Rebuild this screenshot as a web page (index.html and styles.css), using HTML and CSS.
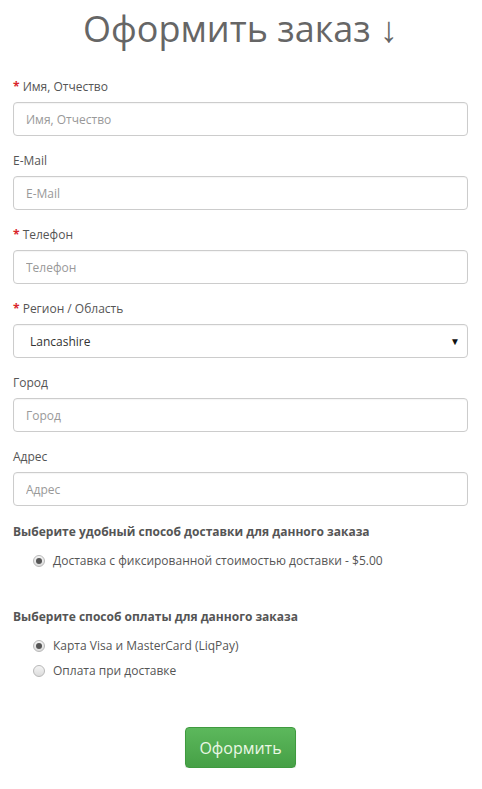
FILE: index.html
```html
<!DOCTYPE html>
<html lang="ru">
<head>
    <meta charset="UTF-8">
    <meta name="viewport" content="width=device-width, initial-scale=1.0">
    <title>Оформить заказ</title>
    <link rel="stylesheet" href="styles.css">
</head>
<body>
    <section class="checkout">
        <h1>Оформить заказ &darr;</h1>

        <form class="checkout-form">
            <div class="form-group">
                <label class="required" for="name">Имя, Отчество</label>
                <input type="text" id="name" placeholder="Имя, Отчество">
            </div>
            <div class="form-group">
                <label for="email">E-Mail</label>
                <input type="text" id="email" placeholder="E-Mail">
            </div>
            <div class="form-group">
                <label class="required" for="phone">Телефон</label>
                <input type="text" id="phone" placeholder="Телефон">
            </div>
            <div class="form-group">
                <label class="required" for="zone">Регион / Область</label>
                <div class="select">
                    <span>Lancashire</span>
                    <span class="caret">&#9660;</span>
                </div>
            </div>
            <div class="form-group">
                <label for="city">Город</label>
                <input type="text" id="city" placeholder="Город">
            </div>
            <div class="form-group">
                <label for="address">Адрес</label>
                <input type="text" id="address" placeholder="Адрес">
            </div>

            <div class="options delivery">
                <h3>Выберите удобный способ доставки для данного заказа</h3>
                <label class="radio"><span class="dot checked"></span>Доставка с фиксированной стоимостью доставки - $5.00</label>
            </div>

            <div class="options payment">
                <h3>Выберите способ оплаты для данного заказа</h3>
                <label class="radio"><span class="dot checked"></span>Карта Visa и MasterCard (LiqPay)</label>
                <label class="radio"><span class="dot"></span>Оплата при доставке</label>
            </div>

            <div class="submit">
                <button type="button">Оформить</button>
            </div>
        </form>
    </section>
</body>
</html>
```

FILE: styles.css
```css
/* General Styles */
body {
    font-family: "Open Sans", Arial, sans-serif;
    margin: 0;
    padding: 0;
    background-color: #fff;
    color: #444;
    font-size: 12px;
}

.checkout {
    padding: 0 14px 0 13px;
}

h1 {
    margin: 0;
    padding-top: 4px;
    height: 73px;
    font-size: 36px;
    font-weight: 400;
    line-height: 50px;
    color: #666;
    text-align: center;
}

.form-group {
    margin-bottom: 15px;
}

.form-group label {
    display: block;
    line-height: 20px;
    margin-bottom: 5px;
    color: #555;
}

.form-group label.required::before {
    content: "* ";
    color: #d9262c;
    font-weight: bold;
}

.form-group input,
.select {
    box-sizing: border-box;
    display: block;
    width: 100%;
    height: 34px;
    padding: 6px 12px;
    font-family: inherit;
    font-size: 12px;
    color: #555;
    border: 1px solid #ccc;
    border-radius: 4px;
    box-shadow: inset 0 1px 1px rgba(0, 0, 0, 0.04);
}

.form-group input::placeholder {
    color: #999;
}

.select {
    display: flex;
    justify-content: space-between;
    align-items: center;
    padding: 0 7px 0 16px;
    color: #333;
}

.select .caret {
    font-size: 10px;
    color: #111;
}

.options h3 {
    margin: 0 0 9px;
    font-size: 12px;
    font-weight: bold;
    line-height: 20px;
    color: #555;
}

.delivery {
    padding-top: 1px;
    margin-bottom: 36px;
}

.radio {
    display: flex;
    align-items: center;
    padding-left: 20px;
    line-height: 20px;
    margin-bottom: 5px;
    color: #555;
}

.dot {
    box-sizing: border-box;
    width: 12px;
    height: 12px;
    margin-right: 8px;
    border: 1px solid #b8b8b8;
    border-radius: 50%;
    background: linear-gradient(#f4f4f4, #dcdcdc);
    position: relative;
}

.dot.checked::after {
    content: "";
    position: absolute;
    left: 2px;
    top: 2px;
    width: 6px;
    height: 6px;
    border-radius: 50%;
    background-color: #555;
}

.submit {
    text-align: center;
    padding-top: 41px;
}

.submit button {
    width: 111px;
    height: 41px;
    font-family: inherit;
    font-size: 16px;
    color: #eaf7e4;
    background: linear-gradient(#5cb85c, #46a046);
    border: 1px solid #3f9a3f;
    border-radius: 4px;
    box-shadow: 0 1px 1px rgba(0, 0, 0, 0.15);
    cursor: pointer;
}
```
